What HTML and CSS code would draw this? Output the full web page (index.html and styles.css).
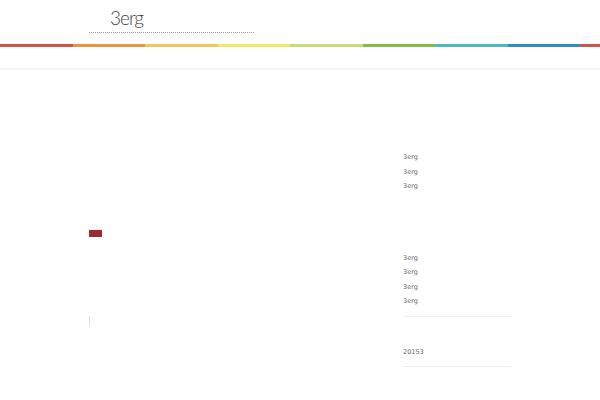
FILE: index.html
```html
<!DOCTYPE html>
<html>
<head>
<meta charset="utf-8">
<link rel="stylesheet" href="styles.css">
</head>
<body>
<header class="top">
  <div class="wrap">
    <div class="brand"><span class="logo">3erg</span></div>
  </div>
  <div class="rainbow">
    <span class="c1"></span><span class="c2"></span><span class="c3"></span><span class="c4"></span><span class="c5"></span><span class="c6"></span><span class="c7"></span><span class="c8"></span><span class="c9"></span>
  </div>
  <div class="subbar"></div>
</header>
<div class="wrap page">
  <main class="main">
    <div class="tag"></div>
    <div class="mark"></div>
  </main>
  <aside class="side">
    <ul class="list first">
      <li>3erg</li><li>3erg</li><li>3erg</li>
    </ul>
    <ul class="list second">
      <li>3erg</li><li>3erg</li><li>3erg</li><li>3erg</li>
    </ul>
    <div class="rule"></div>
    <div class="count">20153</div>
    <div class="rule"></div>
  </aside>
</div>
</body>
</html>
```
FILE: styles.css
```css
* { box-sizing: border-box; }
html, body { margin: 0; padding: 0; background: #fff; }
body { font-family: "DejaVu Sans", sans-serif; color: #555; }
.wrap { width: 422px; margin-left: 89px; }
.brand {
  height: 33px;
  width: 165px;
  border-bottom: 1px dotted #a09090;
  padding-left: 21px;
  padding-top: 7px;
}
.logo {
  font-family: "Lato", "Open Sans", sans-serif;
  font-weight: 300;
  font-size: 19px;
  line-height: 22px;
  color: #444;
  letter-spacing: -1px;
}
.rainbow { display: flex; height: 3px; margin-top: 11px; }
.rainbow span { width: 72.5px; flex: none; }
.rainbow .c9 { flex: 1; }
.c1 { background: #d4544a; }
.c2 { background: #ee9441; }
.c3 { background: #f1c85a; }
.c4 { background: #f5e465; }
.c5 { background: #cadc7a; }
.c6 { background: #87bb45; }
.c7 { background: #50b8c4; }
.c8 { background: #2a8cc8; }
.c9 { background: #d4544a; }
.subbar {
  height: 23px;
  border-bottom: 2px solid #f4f4f4;
}
.page { display: flex; }
.main { width: 314px; }
.tag {
  width: 13px; height: 7px;
  background: #a3282a;
  margin-top: 160px;
}
.mark {
  width: 1px; height: 10px;
  background: #e4e0e8;
  margin-top: 79px;
}
.side { width: 108px; padding-top: 80px; }
.list { list-style: none; margin: 0; padding: 0; }
.list li {
  font-size: 6.5px;
  line-height: 14.5px;
  color: #666;
}
.second { margin-top: 57px; }
.rule { height: 1px; background: #eeeeee; margin-top: 7px; }
.count {
  font-size: 6.5px;
  line-height: 14px;
  margin-top: 28px;
  color: #666;
}
.count + .rule { margin-top: 7px; }
```
